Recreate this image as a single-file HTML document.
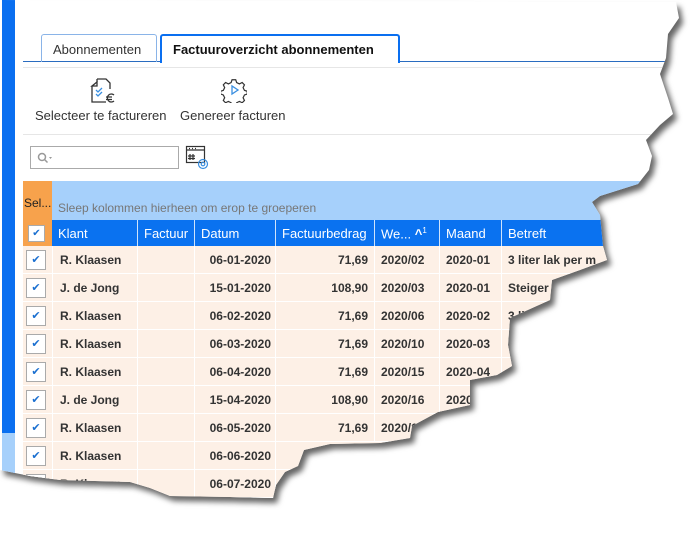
<!DOCTYPE html>
<html><head><meta charset="utf-8"><style>
*{margin:0;padding:0;box-sizing:border-box}
body{width:694px;height:523px;background:#fff;font-family:"Liberation Sans",sans-serif;overflow:hidden;position:relative}
#wrap{position:absolute;left:0;top:0;width:694px;height:523px;filter:drop-shadow(4px 5px 3px rgba(0,0,0,.6))}
#pg{position:absolute;left:0;top:0;width:694px;height:523px;background:#fff;
clip-path:polygon(0 0,676px 2px,679px 18px,668px 34px,666px 58px,660px 74px,668px 98px,673px 114px,660px 125px,646px 140px,652px 156px,649px 170px,638px 184px,600px 196px,592px 202px,600px 215px,603px 246px,607px 260px,580px 270px,552px 280px,550px 300px,510px 318px,508px 345px,512px 366px,497px 375px,470px 380px,470px 405px,438px 412px,412px 426px,410px 438px,380px 443px,330px 444px,304px 450px,298px 466px,285px 472px,276px 485px,273px 498px,230px 497px,170px 496px,150px 488px,130px 482px,60px 480px,30px 476px,0 470px)}
.blue{position:absolute;left:2px;top:0;width:13px;height:433px;background:#0a6ff0}
.lblue{position:absolute;left:2px;top:433px;width:13px;height:40px;background:#a6d0fb}
.tab{position:absolute;top:34px;height:28px;border:1px solid #8ab4e8;border-bottom:none;border-radius:3px 3px 0 0;font-size:13px;color:#333;padding:7px 0 0 11px}
.tab.act{border:2px solid #0a6ff0;border-bottom:none;font-weight:bold;color:#111;padding-top:6px}
.line{position:absolute;left:23px;height:1px}
.lbl{position:absolute;top:108px;font-size:13px;color:#333}
.grp{position:absolute;left:52px;top:181px;width:642px;height:39px;background:#a6d0fb}
.sel{position:absolute;left:23px;top:181px;width:29px;height:65px;background:#f7a24c}
.hdr{position:absolute;left:52px;top:220px;width:642px;height:26px;background:#0a72f0}
.h{position:absolute;top:220px;height:26px;color:#fff;font-size:13px;padding:6px 0 0 6px;border-left:1px solid #cfe3fb}
.row{position:absolute;left:23px;width:671px;height:28px;background:#fdf0e6;border-bottom:1px solid #fff}
.c{position:absolute;top:0;height:27px;font-size:12px;font-weight:bold;color:#333;padding-top:7px;border-left:1px solid #fff}
.cb{position:absolute;left:3px;top:4px;width:20px;height:20px;border:1px solid #aaa;background:#fff;color:#1a6fd0;font-size:11px;text-align:center;line-height:19px}
.rcol{position:absolute;left:23px;top:246px;width:29px;height:300px;background:#fff}
</style></head><body>
<div id="wrap"><div id="pg">
<div class="blue"></div><div class="lblue"></div>
<div class="line" style="top:61px;width:671px;background:#2a6cc0"></div>
<div class="tab" style="left:41px;width:116px">Abonnementen</div>
<div class="tab act" style="left:160px;width:240px;height:29px;background:#fff">Factuuroverzicht abonnementen</div>
<div class="line" style="top:67px;width:671px;background:#e6e6e6"></div>
<svg style="position:absolute;left:89px;top:77px" width="28" height="28" viewBox="0 0 28 28" fill="none" stroke="#333" stroke-width="1.3"><path d="M8 2h9l4 4v6M8 2v3M3 9v16h14"/><path d="M3 9l5-4v4z" fill="#fff"/><path d="M7 13l2 2 4-4M7 17l2 2 4-4" stroke="#3a8fe0"/><path d="M25 18a4 4 0 1 0 0 6M17 20h6M17 22.5h6"/></svg>
<svg style="position:absolute;left:221px;top:77px" width="26" height="26" viewBox="0 0 26 26" fill="none" stroke="#333" stroke-width="1.3"><path d="M11 2h4l1 3 3 1.5 3-1.5 2.5 2.5-1.5 3 1.5 3 3 1v3l-3 1-1.5 3 1.5 3-2.5 2.5-3-1.5-3 1.5-1 3h-4l-1-3-3-1.5-3 1.5-2.5-2.5 1.5-3-1.5-3-3-1v-3l3-1 1.5-3-1.5-3 2.5-2.5 3 1.5 3-1.5z" transform="scale(.92) translate(1 1)"/><path d="M11 9v8l6-4z" stroke="#3a8fe0"/></svg>
<div class="lbl" style="left:35px">Selecteer te factureren</div>
<div class="lbl" style="left:180px">Genereer facturen</div>
<div class="line" style="top:134px;width:671px;background:#e6e6e6"></div>
<div style="position:absolute;left:30px;top:146px;width:149px;height:23px;border:1px solid #aaa;background:#fff"><svg style="position:absolute;left:6px;top:5px" width="16" height="12" viewBox="0 0 16 12" fill="none" stroke="#999" stroke-width="1.5"><circle cx="5" cy="5" r="3.5"/><path d="M7.5 7.5l3 3"/><path d="M12 5h3l-1.5 2z" fill="#999" stroke="none"/></svg></div>
<svg style="position:absolute;left:185px;top:145px" width="26" height="26" viewBox="0 0 26 26" fill="none" stroke="#333" stroke-width="1.2"><rect x="1.5" y="1.5" width="18" height="16"/><path d="M2 5h17M4 3.5h1M7 3.5h1M10 3.5h1M5 9v6M8 9v6M3 11h7M3 13.5h7"/><circle cx="18" cy="19" r="4.5" stroke="#3a8fe0"/><circle cx="18" cy="19" r="1.8" stroke="#3a8fe0"/></svg>
<div class="grp"><span style="position:absolute;left:6px;top:20px;font-size:12px;color:#777">Sleep kolommen hierheen om erop te groeperen</span></div>
<div class="sel"><span style="position:absolute;left:1px;top:15px;font-size:12px;color:#222">Sel...</span><div class="cb" style="top:44px;left:5px;width:17px;height:17px;line-height:16px;font-size:10px">&#10004;</div></div>
<div class="hdr"></div>
<div class="h" style="left:52px;border:none">Klant</div>
<div class="h" style="left:137px">Factuur</div>
<div class="h" style="left:194px">Datum</div>
<div class="h" style="left:275px">Factuurbedrag</div>
<div class="h" style="left:374px">We... <b>^</b><sup style="font-size:8px">1</sup></div>
<div class="h" style="left:439px">Maand</div>
<div class="h" style="left:501px">Betreft</div>
<div class="rcol"></div>
<div class="row" style="top:246px"><div class="cb">&#10004;</div><div class="c" style="left:29px;padding-left:7px">R. Klaasen</div><div class="c" style="left:114px;width:57px"></div><div class="c" style="left:171px;width:81px;text-align:right;padding-right:4px">06-01-2020</div><div class="c" style="left:252px;width:99px;text-align:right;padding-right:6px">71,69</div><div class="c" style="left:351px;padding-left:6px">2020/02</div><div class="c" style="left:416px;padding-left:6px">2020-01</div><div class="c" style="left:478px;padding-left:6px">3 liter lak per m</div></div>
<div class="row" style="top:274px"><div class="cb">&#10004;</div><div class="c" style="left:29px;padding-left:7px">J. de Jong</div><div class="c" style="left:114px;width:57px"></div><div class="c" style="left:171px;width:81px;text-align:right;padding-right:4px">15-01-2020</div><div class="c" style="left:252px;width:99px;text-align:right;padding-right:6px">108,90</div><div class="c" style="left:351px;padding-left:6px">2020/03</div><div class="c" style="left:416px;padding-left:6px">2020-01</div><div class="c" style="left:478px;padding-left:6px">Steiger</div></div>
<div class="row" style="top:302px"><div class="cb">&#10004;</div><div class="c" style="left:29px;padding-left:7px">R. Klaasen</div><div class="c" style="left:114px;width:57px"></div><div class="c" style="left:171px;width:81px;text-align:right;padding-right:4px">06-02-2020</div><div class="c" style="left:252px;width:99px;text-align:right;padding-right:6px">71,69</div><div class="c" style="left:351px;padding-left:6px">2020/06</div><div class="c" style="left:416px;padding-left:6px">2020-02</div><div class="c" style="left:478px;padding-left:6px">3 liter</div></div>
<div class="row" style="top:330px"><div class="cb">&#10004;</div><div class="c" style="left:29px;padding-left:7px">R. Klaasen</div><div class="c" style="left:114px;width:57px"></div><div class="c" style="left:171px;width:81px;text-align:right;padding-right:4px">06-03-2020</div><div class="c" style="left:252px;width:99px;text-align:right;padding-right:6px">71,69</div><div class="c" style="left:351px;padding-left:6px">2020/10</div><div class="c" style="left:416px;padding-left:6px">2020-03</div><div class="c" style="left:478px;padding-left:6px"></div></div>
<div class="row" style="top:358px"><div class="cb">&#10004;</div><div class="c" style="left:29px;padding-left:7px">R. Klaasen</div><div class="c" style="left:114px;width:57px"></div><div class="c" style="left:171px;width:81px;text-align:right;padding-right:4px">06-04-2020</div><div class="c" style="left:252px;width:99px;text-align:right;padding-right:6px">71,69</div><div class="c" style="left:351px;padding-left:6px">2020/15</div><div class="c" style="left:416px;padding-left:6px">2020-04</div><div class="c" style="left:478px;padding-left:6px">3</div></div>
<div class="row" style="top:386px"><div class="cb">&#10004;</div><div class="c" style="left:29px;padding-left:7px">J. de Jong</div><div class="c" style="left:114px;width:57px"></div><div class="c" style="left:171px;width:81px;text-align:right;padding-right:4px">15-04-2020</div><div class="c" style="left:252px;width:99px;text-align:right;padding-right:6px">108,90</div><div class="c" style="left:351px;padding-left:6px">2020/16</div><div class="c" style="left:416px;padding-left:6px">2020-04</div></div>
<div class="row" style="top:414px"><div class="cb">&#10004;</div><div class="c" style="left:29px;padding-left:7px">R. Klaasen</div><div class="c" style="left:114px;width:57px"></div><div class="c" style="left:171px;width:81px;text-align:right;padding-right:4px">06-05-2020</div><div class="c" style="left:252px;width:99px;text-align:right;padding-right:6px">71,69</div><div class="c" style="left:351px;padding-left:6px">2020/18</div></div>
<div class="row" style="top:442px"><div class="cb">&#10004;</div><div class="c" style="left:29px;padding-left:7px">R. Klaasen</div><div class="c" style="left:114px;width:57px"></div><div class="c" style="left:171px;width:81px;text-align:right;padding-right:4px">06-06-2020</div><div class="c" style="left:252px;width:99px"></div></div>
<div class="row" style="top:470px"><div class="cb">&#10004;</div><div class="c" style="left:29px;padding-left:7px">R. Klaasen</div><div class="c" style="left:114px;width:57px"></div><div class="c" style="left:171px;width:81px;text-align:right;padding-right:4px">06-07-2020</div><div class="c" style="left:252px;width:99px"></div></div>
</div></div>
</body></html>
